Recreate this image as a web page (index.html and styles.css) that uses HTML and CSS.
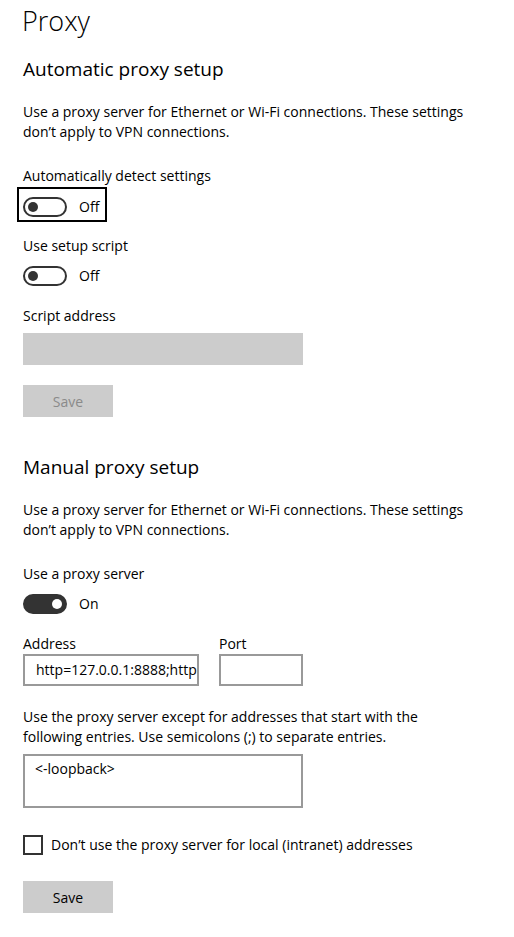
FILE: index.html
```html
<!DOCTYPE html>
<html lang="en">
<head>
<meta charset="utf-8">
<title>Proxy</title>
<link rel="stylesheet" href="styles.css">
</head>
<body>
<main class="page">
  <h1 class="title">Proxy</h1>

  <h2 class="section-title">Automatic proxy setup</h2>
  <p class="desc">Use a proxy server for Ethernet or Wi-Fi connections. These settings<br>don’t apply to VPN connections.</p>

  <div class="label label-first">Automatically detect settings</div>
  <div class="toggle-row focused">
    <span class="toggle"><span class="knob"></span></span>
    <span class="toggle-text">Off</span>
  </div>

  <div class="label label-second">Use setup script</div>
  <div class="toggle-row">
    <span class="toggle"><span class="knob"></span></span>
    <span class="toggle-text">Off</span>
  </div>

  <div class="label label-script">Script address</div>
  <div class="field field-disabled"></div>
  <button class="btn btn-disabled" type="button">Save</button>

  <h2 class="section-title section-manual">Manual proxy setup</h2>
  <p class="desc">Use a proxy server for Ethernet or Wi-Fi connections. These settings<br>don’t apply to VPN connections.</p>

  <div class="label label-first">Use a proxy server</div>
  <div class="toggle-row">
    <span class="toggle on"><span class="knob"></span></span>
    <span class="toggle-text">On</span>
  </div>

  <div class="addr-row">
    <div class="addr-col">
      <div class="label">Address</div>
      <div class="field field-address"><span class="field-text">http=127.0.0.1:8888;http=127.0.0.1:8888</span></div>
    </div>
    <div class="port-col">
      <div class="label">Port</div>
      <div class="field field-port"></div>
    </div>
  </div>

  <p class="desc desc-except">Use the proxy server except for addresses that start with the<br>following entries. Use semicolons (;) to separate entries.</p>
  <div class="field field-area"><span class="field-text">&lt;-loopback&gt;</span></div>

  <div class="check-row">
    <span class="checkbox"></span>
    <span class="check-text">Don’t use the proxy server for local (intranet) addresses</span>
  </div>

  <button class="btn btn-save" type="button">Save</button>
</main>
</body>
</html>
```

FILE: styles.css
```css
html, body {
  margin: 0;
  padding: 0;
  background: #ffffff;
}

body {
  font-family: "Open Sans", "Noto Sans", "Liberation Sans", sans-serif;
  font-size: 14px;
  line-height: 20px;
  color: #000000;
}

.page {
  padding: 4px 0 0 23px;
  display: flex;
  flex-direction: column;
  align-items: flex-start;
}

.title {
  margin: 0 0 0 -1px;
  font-size: 27px;
  font-weight: 300;
  line-height: 34px;
}

.section-title {
  margin: 17px 0 0 0;
  font-size: 19px;
  font-weight: 400;
  line-height: 28px;
}

.section-manual {
  margin-top: 36px;
}

.desc {
  margin: 19px 0 0 0;
  white-space: nowrap;
}

.desc-except {
  margin-top: 21px;
}

.label {
  white-space: nowrap;
}

.label-first {
  margin-top: 24px;
}

.label-second {
  margin-top: 14px;
}

.label-script {
  margin-top: 15px;
}

.toggle-row {
  display: flex;
  align-items: center;
  gap: 12px;
  margin: 0 0 0 -6px;
  padding: 8px 0 3px 4px;
  width: 82px;
  border: 2px solid transparent;
}

.toggle-row.focused {
  margin-top: 1px;
  border-color: #000000;
}

.toggle {
  box-sizing: border-box;
  width: 44px;
  height: 20px;
  border: 2px solid #333333;
  border-radius: 10px;
  display: flex;
  align-items: center;
  padding-left: 3px;
}

.knob {
  width: 10px;
  height: 10px;
  border-radius: 50%;
  background: #333333;
}

.toggle.on {
  background: #333333;
  justify-content: flex-end;
  padding: 0 3px 0 0;
}

.toggle.on .knob {
  background: #ffffff;
}

.toggle-text {
  line-height: 20px;
}

.field {
  box-sizing: border-box;
  height: 32px;
  border: 2px solid #999999;
  background: #ffffff;
  overflow: hidden;
  white-space: nowrap;
  display: flex;
  align-items: center;
  padding-left: 11px;
}

.field-disabled {
  width: 280px;
  margin-top: 7px;
  border-color: #cccccc;
  background: #cccccc;
}

.field-address {
  width: 176px;
  padding-left: 11px;
}

.field-port {
  width: 84px;
}

.field-area {
  width: 280px;
  height: 54px;
  margin-top: 7px;
  align-items: flex-start;
  padding: 3px 0 0 10px;
}

.addr-row {
  display: flex;
  gap: 20px;
  margin-top: 15px;
}

.btn {
  box-sizing: border-box;
  width: 90px;
  height: 32px;
  border: none;
  background: #cccccc;
  font-family: inherit;
  font-size: 14px;
  color: #000000;
  padding: 0;
}

.btn-disabled {
  margin-top: 20px;
  color: #8a8a8a;
}

.btn-save {
  margin-top: 26px;
}

.check-row {
  display: flex;
  align-items: center;
  gap: 8px;
  margin-top: 27px;
}

.checkbox {
  box-sizing: border-box;
  width: 20px;
  height: 20px;
  border: 2px solid #333333;
}

.check-text {
  white-space: nowrap;
}
```
